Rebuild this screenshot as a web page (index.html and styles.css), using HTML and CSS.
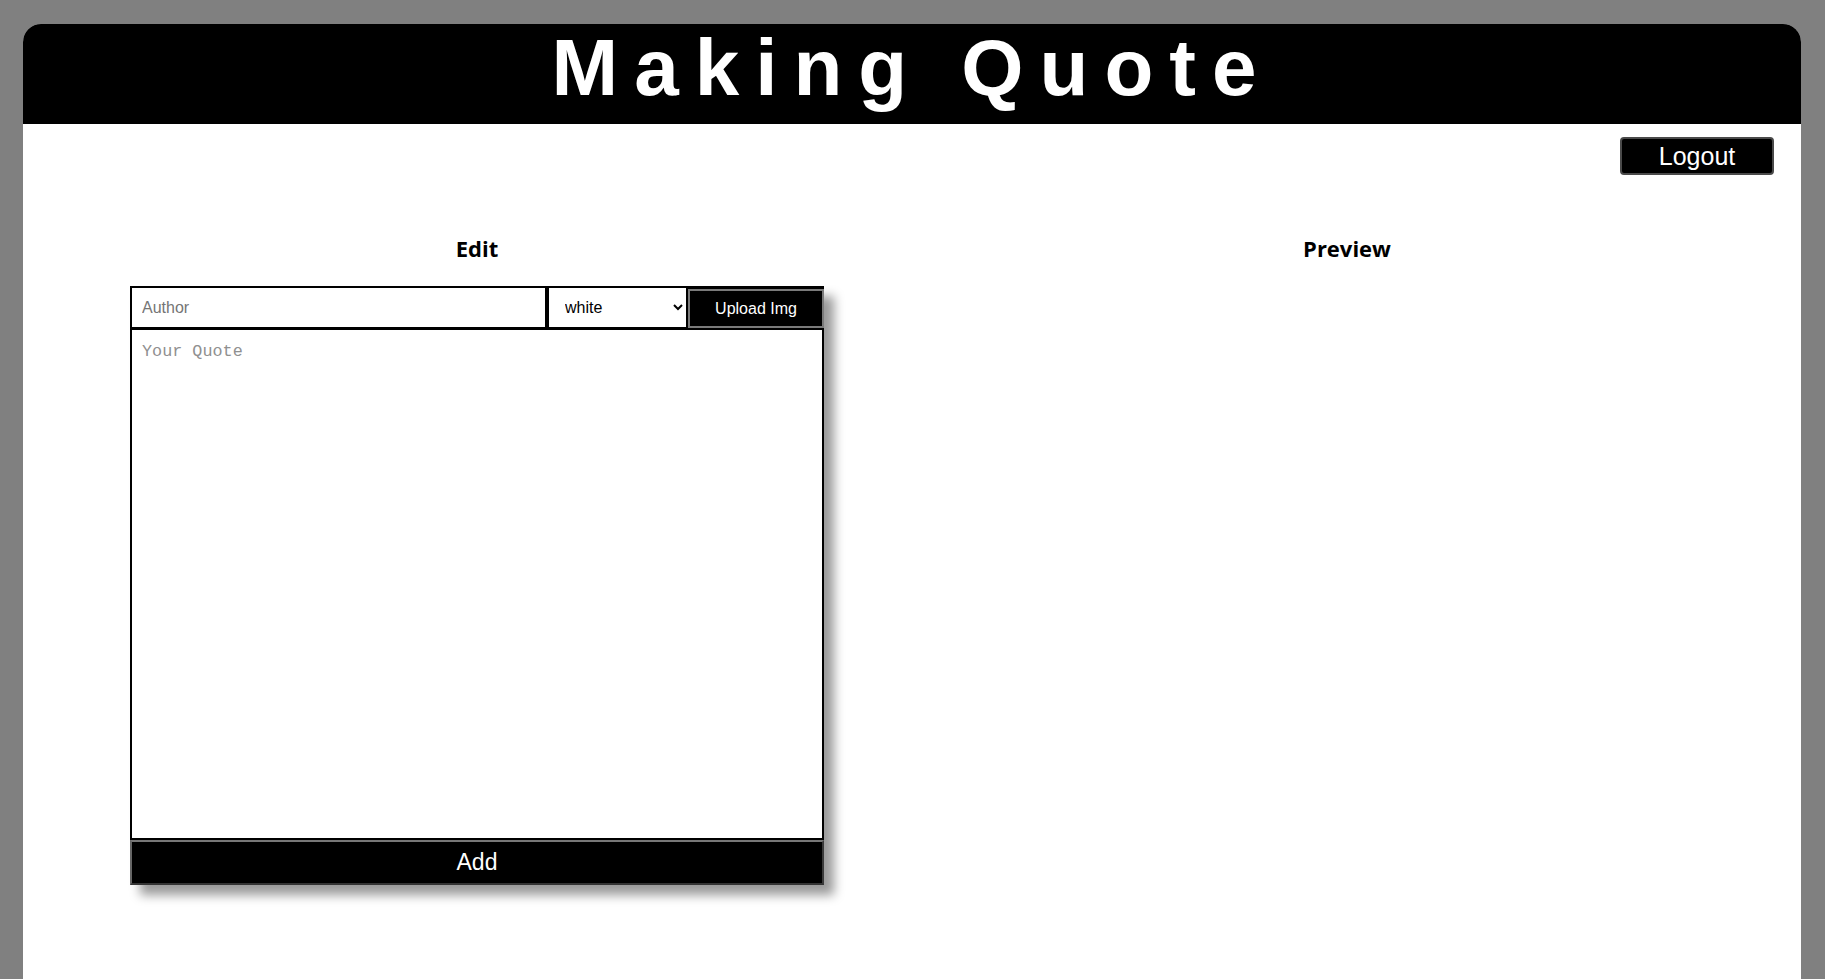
FILE: index.html
```html
<!DOCTYPE html>
<html lang="en">
<head>
<meta charset="utf-8">
<title>Making Quote</title>
<link rel="stylesheet" href="styles.css">
</head>
<body>
<div class="page">
  <header class="masthead">
    <h1 class="title">Making Quote</h1>
  </header>
  <div class="toolbar">
    <button class="logout" type="button">Logout</button>
  </div>
  <main class="columns">
    <section class="col">
      <h2 class="col-title">Edit</h2>
      <div class="editor">
        <div class="editor-row">
          <input class="author" type="text" placeholder="Author">
          <select class="color">
            <option>white</option>
            <option>black</option>
          </select>
          <button class="upload" type="button">Upload Img</button>
        </div>
        <textarea class="quote" placeholder="Your Quote"></textarea>
        <button class="add" type="button">Add</button>
      </div>
    </section>
    <section class="col">
      <h2 class="col-title">Preview</h2>
    </section>
  </main>
</div>
</body>
</html>
```

FILE: styles.css
```css
* { box-sizing: border-box; }

html, body { height: 100%; }

body {
  margin: 0;
  padding: 24px 24px 0 23px;
  background: #808080;
  font-family: "Liberation Sans", Arial, sans-serif;
  overflow: hidden;
}

.page {
  background: #fff;
  border-radius: 18px 18px 0 0;
  min-height: calc(100vh - 24px);
}

.masthead {
  height: 100px;
  background: #000;
  border-radius: 18px 18px 0 0;
}

.title {
  margin: 0;
  color: #fff;
  font: 700 80px/88px "Liberation Sans", Arial, sans-serif;
  letter-spacing: 16px;
  text-align: center;
}

.toolbar {
  display: flex;
  justify-content: flex-end;
  padding: 13px 27px 0 0;
}

.logout {
  width: 154px;
  height: 38px;
  padding: 0;
  background: #000;
  color: #fff;
  border: 2px solid #4a4a4a;
  border-radius: 4px;
  font: 400 25px/1 "Liberation Sans", Arial, sans-serif;
}

.columns {
  display: grid;
  grid-template-columns: 1fr 1fr;
  padding: 0 19px;
  margin-top: 58px;
}

.col-title {
  margin: 0;
  font: 700 22px/30px "Open Sans", "Noto Sans", sans-serif;
  color: #000;
  text-align: center;
}

.editor {
  width: 694px;
  margin: 23px auto 0;
  box-shadow: 10px 10px 10px rgba(0, 0, 0, 0.4);
}

.editor-row {
  display: flex;
  height: 42px;
}

.author {
  flex: 0 0 417px;
  border: 2px solid #000;
  border-bottom-width: 1px;
  padding: 0 10px;
  font: 400 16px "Liberation Sans", Arial, sans-serif;
  color: #000;
  outline: none;
}

.author::placeholder { color: #757575; }

.color {
  flex: 0 0 141px;
  border: 2px solid #000;
  border-bottom-width: 1px;
  border-radius: 0;
  padding: 0 8px 0 12px;
  background: #fff;
  font: 400 16px "Liberation Sans", Arial, sans-serif;
  color: #000;
}

.upload {
  flex: 1 1 auto;
  border: 0;
  border-top: 3px solid #000;
  background: #000;
  box-shadow: inset 0 0 0 2px #7a7a7a;
  color: #fff;
  font: 400 16px "Liberation Sans", Arial, sans-serif;
  padding: 0;
}

.quote {
  display: block;
  width: 694px;
  height: 512px;
  margin: 0;
  border: 2px solid #000;
  padding: 12px 10px;
  resize: none;
  font: 400 16.8px "Liberation Mono", "DejaVu Sans Mono", monospace;
  outline: none;
}

.quote::placeholder { color: #909090; }

.add {
  display: block;
  width: 694px;
  height: 45px;
  margin: 0;
  padding: 0;
  background: #000;
  color: #fff;
  border: 2px solid;
  border-color: #777 #3a3a3a #333 #666;
  font: 400 23px/1 "Liberation Sans", Arial, sans-serif;
}
```
